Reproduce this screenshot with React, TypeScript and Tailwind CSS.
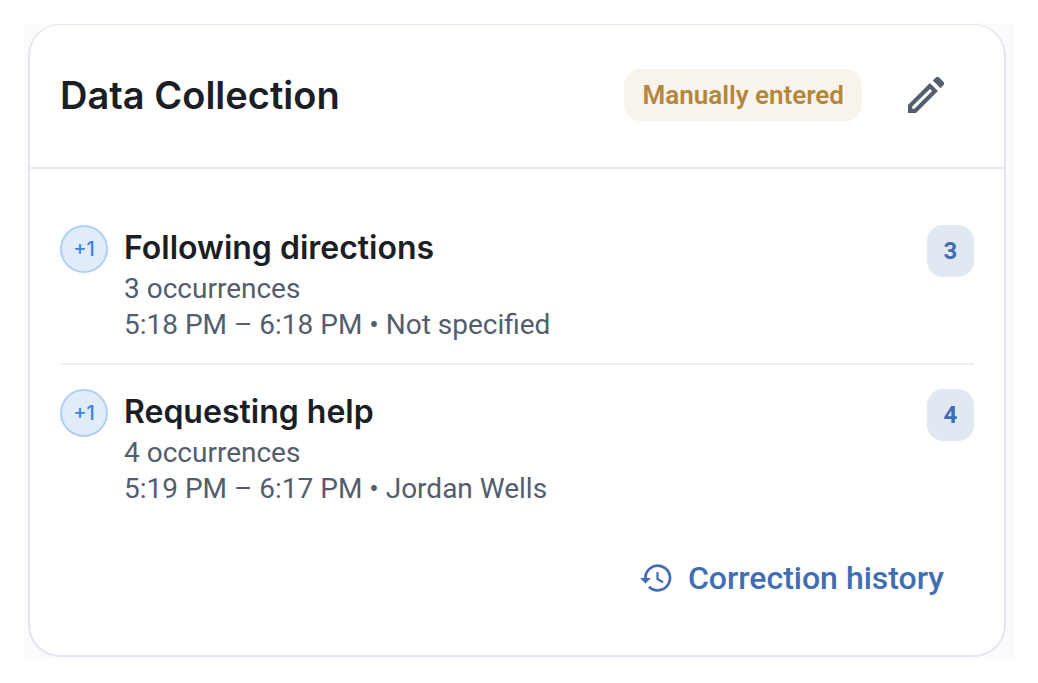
const entries = [
  { title: 'Following directions', count: 3, detail: '5:18 PM – 6:18 PM • Not specified' },
  { title: 'Requesting help', count: 4, detail: '5:19 PM – 6:17 PM • Jordan Wells' },
];

function EditIcon() {
  return (
    <svg viewBox="0 0 36 36" className="size-9" fill="currentColor" aria-hidden="true">
      <path fillRule="evenodd" d="M0 28 21.9 6.1l8 8L8 36H0v-8Zm4.2 1.6v2.2h2.2L24.1 14.1 21.9 11.9 4.2 29.6Z" />
      <path d="m24.8 3.4 2.6-2.5a3 3 0 0 1 4.2 0l3.5 3.5a3 3 0 0 1 0 4.2l-2.5 2.6-7.8-7.8Z" />
    </svg>
  );
}

function HistoryIcon() {
  return (
    <svg viewBox="0 0 32 28" className="h-7 w-8" fill="none" stroke="currentColor" aria-hidden="true">
      <path d="M5.4 14A12.3 12.3 0 1 1 9 22.7" strokeWidth="2.8" />
      <path d="M0 14h11l-5.5 5.5L0 14Z" fill="currentColor" stroke="none" />
      <path d="M17.5 8v7l5.5 3.2" strokeWidth="2.2" />
    </svg>
  );
}

export default function App() {
  return (
    <main className="min-h-screen bg-white p-6 [font-family:Roboto,sans-serif]">
      <div className="bg-[#fbfbfe] pr-2 pb-0.5 pl-1">
        <section className="rounded-[32px] border-2 border-t border-[#e2e6f2] bg-white">
          <header className="flex items-center justify-between border-b-2 border-[#e5e9f1] pt-9 pr-[30px] pb-[38px] pl-[30px]">
            <h1 className="[font-family:Inter,sans-serif] text-[38px] leading-[68px] font-semibold text-[#1b1e25]">Data Collection</h1>
            <div className="flex items-center gap-4">
              <span className="rounded-2xl bg-[#f8f3eb] px-[18px] text-[26px] leading-[52px] font-semibold text-[#b3873f]">
                Manually entered
              </span>
              <button type="button" aria-label="Edit" className="flex h-[68px] w-24 items-center justify-center text-[#535d6d]">
                <EditIcon />
              </button>
            </div>
          </header>
          <ul className="px-[30px] pt-14">
            {entries.map((entry) => (
              <li key={entry.title} className="flex items-start gap-4 border-[#eeeff6] not-first:pt-6 not-last:border-b-2 not-last:pb-5">
                <span className="flex size-12 shrink-0 items-center justify-center rounded-full border-2 border-[#afd0f5] bg-[#e1ecfa] [font-family:Inter,sans-serif] text-xl font-medium text-[#3f83df]">
                  +1
                </span>
                <div className="grow">
                  <h2 className="[font-family:Inter,sans-serif] text-[32px] leading-[46px] font-semibold text-[#1b1e25]">{entry.title}</h2>
                  <p className="text-[28px] leading-9 text-[#535d6d]">{entry.count} occurrences</p>
                  <p className="text-[28px] leading-9 text-[#535d6d]">{entry.detail}</p>
                </div>
                <span className="min-w-[47px] rounded-2xl bg-[#e0e8f1] px-4 text-center text-2xl leading-[52px] font-bold text-[#416eb3]">
                  {entry.count}
                </span>
              </li>
            ))}
          </ul>
          <footer className="flex justify-end px-[60px] pt-12 pb-[54px]">
            <button type="button" className="flex items-center gap-4 text-[32px] leading-[46px] font-medium text-[#416eb3]">
              <HistoryIcon />
              Correction history
            </button>
          </footer>
        </section>
      </div>
    </main>
  );
}
